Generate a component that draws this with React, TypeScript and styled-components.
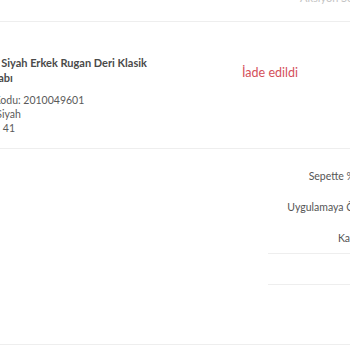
import React from 'react';
import styled, {createGlobalStyle} from "styled-components";

const GlobalStyle = createGlobalStyle`
  html, body {
    margin: 0;
    padding: 0;
    background: #fff;
    font-family: Lato, "Open Sans", sans-serif;
    overflow: hidden;
  }
`;

const summaryRows = [
  {label: 'Sepette %10 İndirim', value: '-120,00 TL'},
  {label: 'Uygulamaya Özel İndirim', value: '-45,00 TL'},
  {label: 'Kargo Masrafı', value: '0,00 TL'},
];

const App = () => {
  return (
    <>
      <GlobalStyle />
      <Viewport>
        <Sheet>
          <TopBar>
            <ActionSelect>Aksiyon Seçin</ActionSelect>
          </TopBar>

          <ProductRow>
            <ProductInfo>
              <ProductName>Parlak Siyah Erkek Rugan Deri Klasik Ayakkabı</ProductName>
              <DetailLine>Ürün Kodu: 2010049601</DetailLine>
              <DetailLine>Renk: Siyah</DetailLine>
              <DetailLine>Beden: 41</DetailLine>
            </ProductInfo>
            <StatusCell>
              <Status>İade edildi</Status>
            </StatusCell>
          </ProductRow>

          <Summary>
            <SummaryList>
              {summaryRows.map((row) => (
                <SummaryRow key={row.label}>
                  <SummaryLabel>{row.label}</SummaryLabel>
                  <SummaryValue>{row.value}</SummaryValue>
                </SummaryRow>
              ))}
              <Totals>
                <TotalRow />
                <TotalRow />
              </Totals>
            </SummaryList>
          </Summary>
        </Sheet>
      </Viewport>
    </>
  );
};

const Viewport = styled.div`
  width: 350px;
  height: 350px;
  overflow: hidden;
  background: #fff;
`;

const Sheet = styled.div`
  margin-left: -40px;
  width: 520px;
`;

const TopBar = styled.div`
  height: 22px;
  border-bottom: 1px solid #eeeeee;
  display: flex;
  padding-left: 340px;
  box-sizing: border-box;
`;

const ActionSelect = styled.span`
  margin-top: -8px;
  height: 12px;
  font-size: 11px;
  line-height: 12px;
  color: #c4c4c4;
`;

const ProductRow = styled.div`
  display: flex;
  height: 126px;
  border-bottom: 1px solid #eeeeee;
`;

const ProductInfo = styled.div`
  width: 260px;
  padding-top: 33px;
  padding-left: 8px;
  box-sizing: border-box;
`;

const ProductName = styled.div`
  width: 195px;
  font-size: 11px;
  line-height: 15px;
  font-weight: 700;
  color: #4a4a4a;
  margin-bottom: 8px;
`;

const DetailLine = styled.div`
  font-size: 10.5px;
  line-height: 14px;
  color: #5a5a5a;
`;

const StatusCell = styled.div`
  width: 100px;
  padding-top: 39px;
  text-align: center;
`;

const Status = styled.span`
  font-size: 12.5px;
  color: #d4505a;
`;

const Summary = styled.div`
  height: 196px;
  border-bottom: 1px solid #eeeeee;
  padding-left: 308px;
  padding-top: 20px;
  box-sizing: border-box;
`;

const SummaryList = styled.div`
  width: 212px;
  display: flex;
  flex-direction: column;
`;

const SummaryRow = styled.div`
  display: grid;
  grid-template-columns: 1fr 66px;
  gap: 12px;
  height: 31px;
  font-size: 10.5px;
  line-height: 14px;
  color: #555;
`;

const SummaryLabel = styled.span`
  text-align: right;
`;

const SummaryValue = styled.span`
  text-align: right;
  color: #333;
`;

const Totals = styled.div`
  margin-top: -9px;
`;

const TotalRow = styled.div`
  height: 30px;
  border-top: 1px solid #eeeeee;
`;

export default App;
